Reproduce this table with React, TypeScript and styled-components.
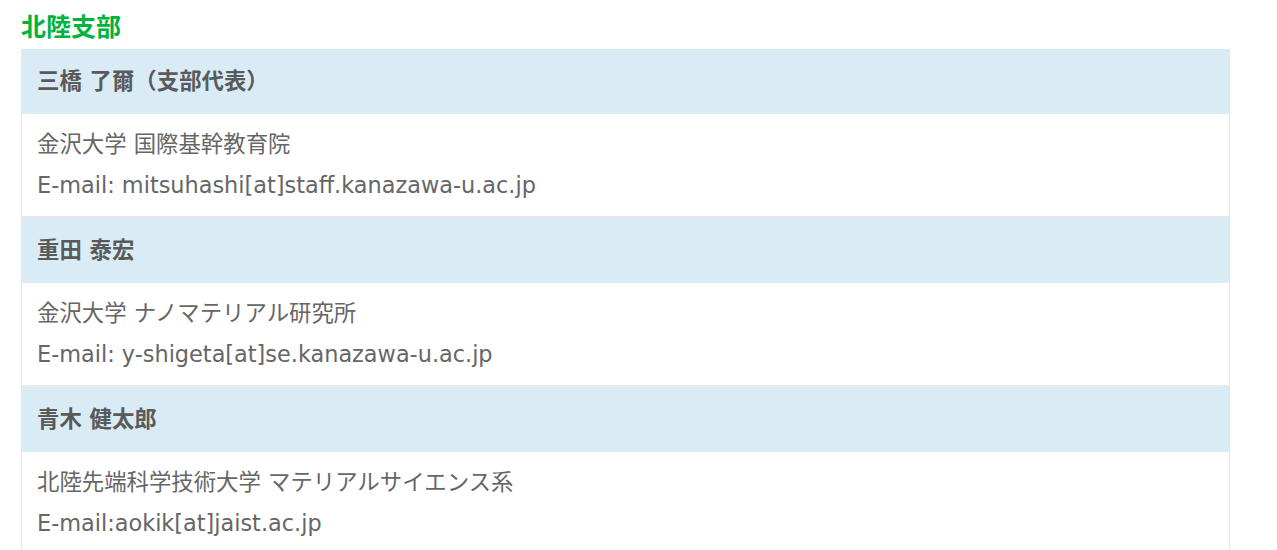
import styled, { createGlobalStyle } from 'styled-components';

const Global = createGlobalStyle`
  body {
    margin: 0;
    background: #fff;
    font-family: "DejaVu Sans", "Noto Sans CJK JP", sans-serif;
  }
`;

const Page = styled.div`
  padding: 10px 47px 0 21px;
`;

const Heading = styled.h2`
  margin: 0 0 9px;
  font-size: 25px;
  line-height: 30px;
  font-weight: 700;
  color: #00b33c;
  font-family: "Noto Sans CJK JP", sans-serif;
`;

const List = styled.dl`
  margin: 0;
  border: 1px solid #e8e8e8;
  border-top: none;
`;

const Name = styled.dt<{ $first?: boolean }>`
  background: #d9ecf5;
  border-top: ${(p) => (p.$first ? 'none' : '2px solid #e8e8e8')};
  padding: 12px 15px;
  font-size: 22.4px;
  line-height: 41px;
  font-weight: 700;
  color: #5a5a5a;
`;

const Detail = styled.dd`
  margin: 0;
  padding: 10px 15px;
  font-size: 22.4px;
  line-height: 41px;
  color: #666;
`;

const members = [
  { name: '三橋 了爾（支部代表）', org: '金沢大学 国際基幹教育院', mail: 'E-mail: mitsuhashi[at]staff.kanazawa-u.ac.jp' },
  { name: '重田 泰宏', org: '金沢大学 ナノマテリアル研究所', mail: 'E-mail: y-shigeta[at]se.kanazawa-u.ac.jp' },
  { name: '青木 健太郎', org: '北陸先端科学技術大学 マテリアルサイエンス系', mail: 'E-mail:aokik[at]jaist.ac.jp' },
];

export default function App() {
  return (
    <Page>
      <Global />
      <Heading>北陸支部</Heading>
      <List>
        {members.map((m, i) => (
          <div key={m.name}>
            <Name $first={i === 0}>{m.name}</Name>
            <Detail>
              {m.org}
              <br />
              {m.mail}
            </Detail>
          </div>
        ))}
      </List>
    </Page>
  );
}
